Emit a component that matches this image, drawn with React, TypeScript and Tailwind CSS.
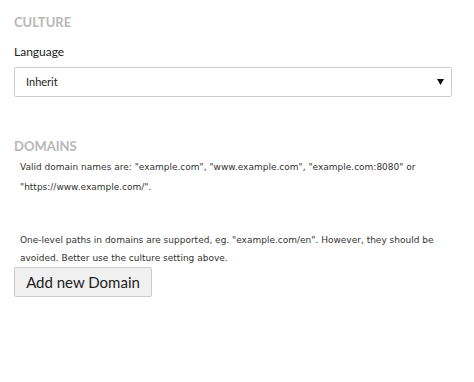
import React from "react";

export default function App() {
  const desc = { fontFamily: '"DejaVu Sans", Verdana, sans-serif' };
  return (
    <div className="w-[474px] h-[382px] bg-white px-[14px] pt-[14px]" style={{ fontFamily: "Lato, sans-serif" }}>
      <div className="text-[13px] font-bold text-[#b8b8b8] leading-[16px]">CULTURE</div>
      <div className="mt-[14px] text-[12px] text-[#222] leading-[15px]">Language</div>
      <div className="mt-[8px] w-[438px] h-[30px] border border-[#cccccc] rounded-[2px] flex items-center justify-between pl-[11px] pr-[7px]">
        <span className="text-[11px] text-[#222]">Inherit</span>
        <svg width="7" height="6" viewBox="0 0 7 6"><path d="M0 0h7L3.5 6z" fill="#111" /></svg>
      </div>
      <div className="mt-[41px] text-[13px] font-bold text-[#b8b8b8] leading-[16px]">DOMAINS</div>
      <div className="mt-[3px] pl-[6px] text-[9px] text-[#333]" style={desc}>
        <p className="leading-[20px]">Valid domain names are: "example.com", "www.example.com", "example.com:8080" or "https://www.example.com/".</p>
        <p className="mt-[34px] leading-[18px]">One-level paths in domains are supported, eg. "example.com/en". However, they should be avoided. Better use the culture setting above.</p>
      </div>
      <button className="h-[30px] w-[138px] border border-[#cccccc] rounded-[2px] bg-[#f0f0f0] text-[15px] text-[#222] flex items-center justify-center" style={{ fontFamily: "Lato, sans-serif" }}>
        Add new Domain
      </button>
    </div>
  );
}
